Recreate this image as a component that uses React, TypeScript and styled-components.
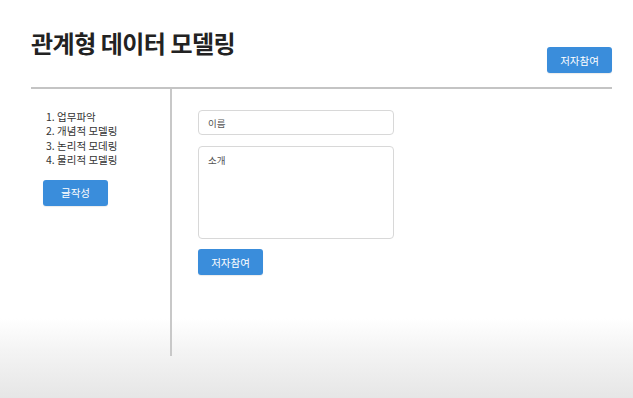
import React from 'react';
import styled, { createGlobalStyle } from 'styled-components';

const GlobalStyle = createGlobalStyle`
  html, body {
    margin: 0;
    padding: 0;
  }
  body {
    font-family: 'Noto Sans CJK KR', 'Noto Sans', sans-serif;
    color: #333;
  }
`;

// page with the faded bottom edge of the video frame
const Page = styled.div`
  box-sizing: border-box;
  min-height: 100vh;
  padding: 0 21px 0 31px;
  background: linear-gradient(
    to bottom,
    #ffffff 0%,
    #ffffff 80%,
    #f4f4f4 88%,
    #e6e6e6 100%
  );
`;

const Header = styled.header`
  display: flex;
  justify-content: space-between;
  align-items: flex-end;
  height: 89px;
  box-sizing: border-box;
  padding-bottom: 14px;
  border-bottom: 2px solid #c4c4c4;
`;

const Title = styled.h1`
  margin: 0 0 15px;
  font-size: 24px;
  line-height: 30px;
  font-weight: 700;
  color: #222;
  letter-spacing: -0.5px;
`;

const Button = styled.button`
  width: 65px;
  height: 26px;
  border: none;
  border-radius: 3px;
  background: #3a8ddb;
  color: #fff;
  font-family: inherit;
  font-size: 10.5px;
  padding: 0;
  cursor: pointer;
  box-shadow: 0 1px 1px rgba(0, 0, 0, 0.08);
`;

const Body = styled.div`
  display: flex;
`;

const Sidebar = styled.aside`
  width: 141px;
  height: 267px;
  box-sizing: border-box;
  border-right: 2px solid #c8c8c8;
  padding: 21px 0 0 12px;
`;

const Steps = styled.ol`
  margin: 0 0 0 3px;
  padding: 0;
  list-style: none;
  font-size: 10.5px;
  line-height: 14.3px;
  color: #333;
`;

const SideAction = styled.div`
  padding-top: 11px;
`;

const Main = styled.main`
  display: flex;
  flex-direction: column;
  align-items: flex-start;
  gap: 10px;
  padding: 21px 0 0 26px;
`;

const field = `
  box-sizing: border-box;
  width: 196px;
  border: 1px solid #d8d8d8;
  border-radius: 4px;
  background: #fff;
  font-family: inherit;
  font-size: 9.5px;
  color: #444;
  padding: 0 9px;
  outline: none;
  &::placeholder {
    color: #555;
  }
`;

const NameInput = styled.input`
  ${field}
  height: 25px;
`;

const IntroArea = styled.textarea`
  ${field}
  height: 93px;
  margin-top: 1px;
  padding-top: 6px;
  resize: none;
`;

const steps = ['1. 업무파악', '2. 개념적 모델링', '3. 논리적 모데링', '4. 물리적 모델링'];

export default function App() {
  return (
    <Page>
      <GlobalStyle />
      <Header>
        <Title>관계형 데이터 모델링</Title>
        <Button>저자참여</Button>
      </Header>
      <Body>
        <Sidebar>
          <Steps>
            {steps.map((s) => (
              <li key={s}>{s}</li>
            ))}
          </Steps>
          <SideAction>
            <Button>글작성</Button>
          </SideAction>
        </Sidebar>
        <Main>
          <NameInput placeholder="이름" />
          <IntroArea placeholder="소개" />
          <Button>저자참여</Button>
        </Main>
      </Body>
    </Page>
  );
}
